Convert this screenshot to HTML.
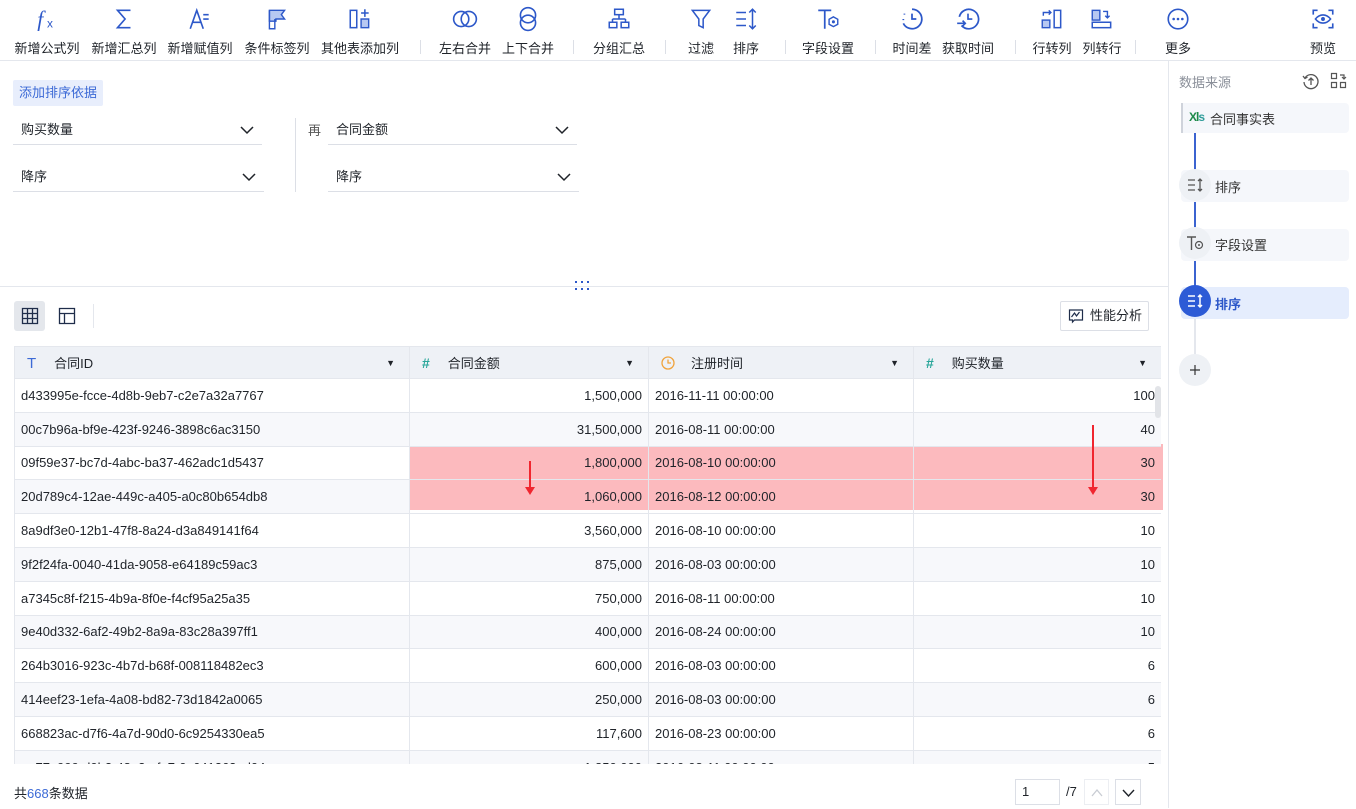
<!DOCTYPE html>
<html><head><meta charset="utf-8">
<style>
*{box-sizing:border-box;margin:0;padding:0}
body{width:1356px;height:808px;overflow:hidden;background:#fff;font-family:"Liberation Sans","Noto Sans CJK SC",sans-serif;color:#1f2329;position:relative;font-size:13px}
.a{position:absolute}
.tb{position:absolute;top:0;left:0;width:1356px;height:61px;border-bottom:1px solid #e4e7ed}
.ti{position:absolute;top:0;width:80px;margin-left:-40px;text-align:center}
.ti svg{position:absolute;left:27px;top:6px;width:26px;height:26px}
.ti span{position:absolute;top:38px;left:0;width:80px;font-size:13px;color:#1f2329;white-space:nowrap}
.sep{position:absolute;top:40px;width:1px;height:14px;background:#dcdfe6}
.sel{position:absolute;border-bottom:1px solid #dcdfe6;height:30px;font-size:13px;padding-left:8px;line-height:30px}
.sel svg{position:absolute;right:8px;top:11px}
table{border-collapse:collapse;table-layout:fixed;position:absolute;left:0;top:0;width:1147px}
td,th{border:1px solid #e4e7ed;font-size:13px;white-space:nowrap;overflow:hidden;padding:0 6px;font-weight:normal}
tr{height:33.8px}
tr.h{height:32px}
th{background:#eef1f6;text-align:left;position:relative}
tr:nth-child(odd) td{background:#f7f8fb}
tr td.w{background:#fff !important}
tr td.t{background:transparent !important}
.r{text-align:right}
.rp{position:absolute;left:1168px;top:61px;width:188px;height:747px;border-left:1px solid #e4e7ed}
.node{position:absolute;left:12px;width:168px;height:32px;background:#f5f7fb;border-radius:4px}
.circ{position:absolute;left:10px;width:32px;height:32px;border-radius:16px;background:#eef1f5}
</style></head><body>
<div class="tb">
<div class="ti" style="left:47px"><svg viewBox="0 0 24 24"><text x="3" y="19" font-family="Liberation Serif" font-style="italic" font-size="20" fill="#2d58c9">f</text><text x="12" y="20" font-family="Liberation Sans" font-size="11" fill="#2d58c9">x</text></svg><span>新增公式列</span></div>
<div class="ti" style="left:124px"><svg viewBox="0 0 24 24"><path d="M18 4H6l7 8-7 8h12" fill="none" stroke="#2d58c9" stroke-width="1.5"/></svg><span>新增汇总列</span></div>
<div class="ti" style="left:200px"><svg viewBox="0 0 24 24"><path d="M3 21L9 4l6 17M5.5 15h7" fill="none" stroke="#2d58c9" stroke-width="1.5"/><path d="M15 8h5M15 12h5" stroke="#2d58c9" stroke-width="1.5"/></svg><span>新增赋值列</span></div>
<div class="ti" style="left:277px"><svg viewBox="0 0 24 24"><path d="M5 4h14l-3 4 3 4H11v2H5z" fill="#b7c8f2" stroke="#2d58c9" stroke-width="1.3"/><path d="M5 4v17h5V12" fill="none" stroke="#2d58c9" stroke-width="1.3"/></svg><span>条件标签列</span></div>
<div class="ti" style="left:360px"><svg viewBox="0 0 24 24"><rect x="3" y="4" width="6" height="16" fill="none" stroke="#2d58c9" stroke-width="1.4"/><rect x="13" y="12" width="7" height="8" fill="#b7c8f2" stroke="#2d58c9" stroke-width="1.3"/><path d="M16.5 3v7M13 6.5h7" stroke="#2d58c9" stroke-width="1.4"/></svg><span>其他表添加列</span></div>
<div class="sep" style="left:420px"></div>
<div class="ti" style="left:465px"><svg viewBox="0 0 24 24"><circle cx="8.5" cy="12" r="7" fill="none" stroke="#2d58c9" stroke-width="1.5"/><circle cx="15.5" cy="12" r="7" fill="none" stroke="#2d58c9" stroke-width="1.5"/></svg><span>左右合并</span></div>
<div class="ti" style="left:528px"><svg viewBox="0 0 24 24"><circle cx="12" cy="8.5" r="7" fill="none" stroke="#2d58c9" stroke-width="1.5"/><circle cx="12" cy="15.5" r="7" fill="none" stroke="#2d58c9" stroke-width="1.5"/></svg><span>上下合并</span></div>
<div class="sep" style="left:573px"></div>
<div class="ti" style="left:619px"><svg viewBox="0 0 24 24"><rect x="8" y="3" width="8" height="5" fill="none" stroke="#2d58c9" stroke-width="1.4"/><path d="M12 8v4M6 12h12M6 12v3M18 12v3" fill="none" stroke="#2d58c9" stroke-width="1.4"/><rect x="3" y="15" width="7" height="5" fill="none" stroke="#2d58c9" stroke-width="1.4"/><rect x="14" y="15" width="7" height="5" fill="none" stroke="#2d58c9" stroke-width="1.4"/></svg><span>分组汇总</span></div>
<div class="sep" style="left:665px"></div>
<div class="ti" style="left:701px"><svg viewBox="0 0 24 24"><path d="M4 4h16l-6 8v8l-4-2v-6z" fill="none" stroke="#2d58c9" stroke-width="1.4"/></svg><span>过滤</span></div>
<div class="ti" style="left:746px"><svg viewBox="0 0 24 24"><path d="M3 6h9M3 12h9M3 18h9M18 3v18M15 6l3-3 3 3M15 18l3 3 3-3" fill="none" stroke="#2d58c9" stroke-width="1.4"/></svg><span>排序</span></div>
<div class="sep" style="left:785px"></div>
<div class="ti" style="left:828px"><svg viewBox="0 0 24 24"><path d="M3 4h12M9 4v17" fill="none" stroke="#2d58c9" stroke-width="1.6"/><path d="M17 10l4 2.3v4.6L17 19l-4-2.1v-4.6z" fill="none" stroke="#2d58c9" stroke-width="1.3"/><circle cx="17" cy="14.6" r="1.4" fill="#2d58c9"/></svg><span>字段设置</span></div>
<div class="sep" style="left:875px"></div>
<div class="ti" style="left:912px"><svg viewBox="0 0 24 24"><path d="M12 3a9 9 0 1 1-8 13" fill="none" stroke="#2d58c9" stroke-width="1.6"/><path d="M4 13v-1M5 8v-1" stroke="#2d58c9" stroke-width="1.6"/><path d="M12 7v5h4" fill="none" stroke="#2d58c9" stroke-width="1.6"/></svg><span>时间差</span></div>
<div class="ti" style="left:968px"><svg viewBox="0 0 24 24"><path d="M4 10a9 9 0 1 1 2 8" fill="none" stroke="#2d58c9" stroke-width="1.6"/><path d="M12 7v5h4M2 16h7M7 13.5l2.5 2.5L7 18.5" fill="none" stroke="#2d58c9" stroke-width="1.5"/></svg><span>获取时间</span></div>
<div class="sep" style="left:1015px"></div>
<div class="ti" style="left:1052px"><svg viewBox="0 0 24 24"><rect x="3" y="13" width="7" height="7" fill="#b7c8f2" stroke="#2d58c9" stroke-width="1.3"/><rect x="14" y="4" width="6" height="16" fill="none" stroke="#2d58c9" stroke-width="1.4"/><path d="M4 9V6h7M9 4l2 2-2 2" fill="none" stroke="#2d58c9" stroke-width="1.3"/></svg><span>行转列</span></div>
<div class="ti" style="left:1102px"><svg viewBox="0 0 24 24"><rect x="3" y="4" width="7" height="9" fill="#b7c8f2" stroke="#2d58c9" stroke-width="1.3"/><rect x="3" y="15" width="17" height="5" fill="none" stroke="#2d58c9" stroke-width="1.4"/><path d="M13 5h4v6M15 9l2 2 2-2" fill="none" stroke="#2d58c9" stroke-width="1.3"/></svg><span>列转行</span></div>
<div class="sep" style="left:1135px"></div>
<div class="ti" style="left:1178px"><svg viewBox="0 0 24 24"><circle cx="12" cy="12" r="9" fill="none" stroke="#2d58c9" stroke-width="1.5"/><circle cx="8" cy="12" r="1.2" fill="#2d58c9"/><circle cx="12" cy="12" r="1.2" fill="#2d58c9"/><circle cx="16" cy="12" r="1.2" fill="#2d58c9"/></svg><span>更多</span></div>
<div class="ti" style="left:1323px"><svg viewBox="0 0 24 24"><path d="M3 8V4h4M17 4h4v4M21 16v4h-4M7 20H3v-4" fill="none" stroke="#2d58c9" stroke-width="1.5"/><path d="M5 12c4-5 10-5 14 0-4 5-10 5-14 0z" fill="none" stroke="#2d58c9" stroke-width="1.4"/><circle cx="12" cy="12" r="1.8" fill="#2d58c9"/></svg><span>预览</span></div>
</div>

<div class="a" style="left:13px;top:80px;width:90px;height:26px;background:#e8eefc;border-radius:2px;color:#3c6ad6;font-size:13px;line-height:26px;text-align:center">添加排序依据</div>
<div class="sel" style="left:13px;top:115px;width:249px">购买数量<svg width="14" height="9" viewBox="0 0 14 9"><path d="M1 1l6 6 6-6" fill="none" stroke="#1f2329" stroke-width="1.5"/></svg></div>
<div class="sel" style="left:13px;top:162px;width:251px">降序<svg width="14" height="9" viewBox="0 0 14 9"><path d="M1 1l6 6 6-6" fill="none" stroke="#1f2329" stroke-width="1.5"/></svg></div>
<div class="a" style="left:295px;top:118px;width:1px;height:74px;background:#dcdfe6"></div>
<div class="a" style="left:308px;top:120px;font-size:13px;color:#555">再</div>
<div class="sel" style="left:328px;top:115px;width:249px">合同金额<svg width="14" height="9" viewBox="0 0 14 9"><path d="M1 1l6 6 6-6" fill="none" stroke="#1f2329" stroke-width="1.5"/></svg></div>
<div class="sel" style="left:328px;top:162px;width:251px">降序<svg width="14" height="9" viewBox="0 0 14 9"><path d="M1 1l6 6 6-6" fill="none" stroke="#1f2329" stroke-width="1.5"/></svg></div>

<div class="a" style="left:0;top:286px;width:1168px;height:1px;background:#e4e7ed"></div>
<svg class="a" style="left:574px;top:280px" width="18" height="12"><g fill="#2d58c9"><rect x="1" y="1" width="2" height="2"/><rect x="7" y="1" width="2" height="2"/><rect x="13" y="1" width="2" height="2"/><rect x="1" y="8" width="2" height="2"/><rect x="7" y="8" width="2" height="2"/><rect x="13" y="8" width="2" height="2"/></g></svg>

<div class="a" style="left:14px;top:301px;width:31px;height:30px;background:#e4e7ec;border-radius:3px"></div>
<svg class="a" style="left:21px;top:307px" width="18" height="18" viewBox="0 0 18 18"><path d="M1.5 1.5h15v15h-15zM1.5 6.5h15M1.5 11.5h15M6.5 1.5v15M11.5 1.5v15" fill="none" stroke="#1f2d4a" stroke-width="1.3"/></svg>
<svg class="a" style="left:58px;top:307px" width="18" height="18" viewBox="0 0 18 18"><path d="M1.5 1.5h15v15h-15zM1.5 6.5h15M6.5 6.5v10" fill="none" stroke="#1f2d4a" stroke-width="1.3"/></svg>
<div class="a" style="left:93px;top:304px;width:1px;height:24px;background:#e4e7ed"></div>
<div class="a" style="left:1060px;top:301px;width:89px;height:30px;border:1px solid #dcdfe6;border-radius:2px;font-size:13px;line-height:28px;padding-left:29px">性能分析</div>
<svg class="a" style="left:1068px;top:308px" width="16" height="16" viewBox="0 0 16 16"><path d="M1.5 2h13v10h-8l-2 2v-2h-3z" fill="none" stroke="#1f2d4a" stroke-width="1.2"/><path d="M3.5 9l3-4 2 3 3-4" fill="none" stroke="#1f2d4a" stroke-width="1.2"/></svg>

<div class="a" style="left:407px;top:444px;width:756px;height:66px;background:rgba(248,90,100,0.42);z-index:1"></div>
<div class="a" style="left:14px;top:346px;width:1147px;height:418px;overflow:hidden;z-index:2">
<table>
<colgroup><col style="width:395px"><col style="width:239px"><col style="width:265px"><col style="width:248px"></colgroup>
<tr class="h"><th><span style="color:#3c6ad6;font-size:15px;margin:0 18px 0 6px">T</span>合同ID<span style="position:absolute;right:14px;top:11px;font-size:9px">▼</span></th>
<th><span style="color:#29a69a;font-size:14px;margin:0 18px 0 6px;font-weight:bold">#</span>合同金额<span style="position:absolute;right:14px;top:11px;font-size:9px">▼</span></th>
<th><svg width="14" height="14" viewBox="0 0 14 14" style="vertical-align:-2px;margin:0 16px 0 6px"><circle cx="7" cy="7" r="6" fill="none" stroke="#f0a33c" stroke-width="1.3"/><path d="M7 3.5V7h3" fill="none" stroke="#f0a33c" stroke-width="1.3"/></svg>注册时间<span style="position:absolute;right:14px;top:11px;font-size:9px">▼</span></th>
<th><span style="color:#29a69a;font-size:14px;margin:0 18px 0 6px;font-weight:bold">#</span>购买数量<span style="position:absolute;right:14px;top:11px;font-size:9px">▼</span></th></tr>
<tr><td class="w">d433995e-fcce-4d8b-9eb7-c2e7a32a7767</td><td class="r w">1,500,000</td><td class="w">2016-11-11 00:00:00</td><td class="r w">100</td></tr>
<tr><td>00c7b96a-bf9e-423f-9246-3898c6ac3150</td><td class="r">31,500,000</td><td>2016-08-11 00:00:00</td><td class="r">40</td></tr>
<tr><td class="w">09f59e37-bc7d-4abc-ba37-462adc1d5437</td><td class="r t">1,800,000</td><td class="t">2016-08-10 00:00:00</td><td class="r t">30</td></tr>
<tr><td>20d789c4-12ae-449c-a405-a0c80b654db8</td><td class="r t">1,060,000</td><td class="t">2016-08-12 00:00:00</td><td class="r t">30</td></tr>
<tr><td class="w">8a9df3e0-12b1-47f8-8a24-d3a849141f64</td><td class="r w">3,560,000</td><td class="w">2016-08-10 00:00:00</td><td class="r w">10</td></tr>
<tr><td>9f2f24fa-0040-41da-9058-e64189c59ac3</td><td class="r">875,000</td><td>2016-08-03 00:00:00</td><td class="r">10</td></tr>
<tr><td class="w">a7345c8f-f215-4b9a-8f0e-f4cf95a25a35</td><td class="r w">750,000</td><td class="w">2016-08-11 00:00:00</td><td class="r w">10</td></tr>
<tr><td>9e40d332-6af2-49b2-8a9a-83c28a397ff1</td><td class="r">400,000</td><td>2016-08-24 00:00:00</td><td class="r">10</td></tr>
<tr><td class="w">264b3016-923c-4b7d-b68f-008118482ec3</td><td class="r w">600,000</td><td class="w">2016-08-03 00:00:00</td><td class="r w">6</td></tr>
<tr><td>414eef23-1efa-4a08-bd82-73d1842a0065</td><td class="r">250,000</td><td>2016-08-03 00:00:00</td><td class="r">6</td></tr>
<tr><td class="w">668823ac-d7f6-4a7d-90d0-6c9254330ea5</td><td class="r w">117,600</td><td class="w">2016-08-23 00:00:00</td><td class="r w">6</td></tr>
<tr><td>ee77e999-d0b2-48e2-afa7-0c641263ed04</td><td class="r">1,850,000</td><td>2016-08-11 00:00:00</td><td class="r">5</td></tr>
</table>
</div>
<div class="a" style="left:1155px;top:386px;width:6px;height:32px;background:#e2e4e8;border-radius:3px;z-index:3"></div>
<div class="a" style="left:529px;top:461px;width:2px;height:28px;background:#f0262f;z-index:3"></div>
<div class="a" style="left:525px;top:487px;width:0;height:0;border-left:5px solid transparent;border-right:5px solid transparent;border-top:8px solid #f0262f;z-index:3"></div>
<div class="a" style="left:1092px;top:425px;width:2px;height:64px;background:#f0262f;z-index:3"></div>
<div class="a" style="left:1088px;top:487px;width:0;height:0;border-left:5px solid transparent;border-right:5px solid transparent;border-top:8px solid #f0262f;z-index:3"></div>

<div class="a" style="left:14px;top:783px;font-size:13px">共<span style="color:#3c6ad6">668</span>条数据</div>
<div class="a" style="left:1015px;top:779px;width:45px;height:26px;border:1px solid #dcdfe6;font-size:13px;line-height:24px;padding-left:6px">1</div>
<div class="a" style="left:1066px;top:784px;font-size:13px">/7</div>
<div class="a" style="left:1084px;top:779px;width:25px;height:26px;border:1px solid #eceef2"><svg width="25" height="26"><path d="M7 16l5-6 5 6" fill="none" stroke="#c8ccd3" stroke-width="1.3"/></svg></div>
<div class="a" style="left:1115px;top:779px;width:26px;height:26px;border:1px solid #dcdfe6"><svg width="25" height="26"><path d="M7 10l5.5 6 5.5-6" fill="none" stroke="#1f2329" stroke-width="1.4"/></svg></div>

<div class="rp">
<div class="a" style="left:10px;top:11px;font-size:13px;color:#8a8f99">数据来源</div>
<svg class="a" style="left:133px;top:11px" width="18" height="18" viewBox="0 0 18 18"><path d="M3 6a7 7 0 1 1-1 4" fill="none" stroke="#555" stroke-width="1.3"/><path d="M1 4l2 2.5 2.5-1.5M9 13V6M6.5 8.5L9 6l2.5 2.5" fill="none" stroke="#555" stroke-width="1.3"/></svg>
<svg class="a" style="left:161px;top:11px" width="17" height="17" viewBox="0 0 17 17"><path d="M1.5 1.5h5v5h-5zM10.5 10.5h5v5h-5zM1.5 10.5h5v5h-5z" fill="none" stroke="#555" stroke-width="1.2"/><path d="M10 3h4v4M12 5l2 2 2-2" fill="none" stroke="#555" stroke-width="1.2"/></svg>
<div class="node" style="top:42px;height:30px;border-left:2px solid #cfd3db;border-radius:0 4px 4px 0"><span class="a" style="left:6px;top:7px;font-size:12px;font-weight:bold;color:#1d8a4a;letter-spacing:-1px">Xl<span style="color:#2f9c9a">s</span></span><span class="a" style="left:27px;top:6px;font-size:13px;color:#333">合同事实表</span></div>
<div class="a" style="left:25px;top:72px;width:2px;height:164px;background:#3b63d0"></div>
<div class="a" style="left:25px;top:256px;width:2px;height:60px;background:#e4e7ed"></div>
<div class="node" style="top:109px"><span class="a" style="left:34px;top:7px;color:#333">排序</span></div>
<div class="circ" style="top:108px"><svg width="32" height="32" viewBox="0 0 32 32"><path d="M9 11h7M9 16h7M9 21h7M21 10v12M19 12l2-2 2 2M19 20l2 2 2-2" fill="none" stroke="#555" stroke-width="1.3"/></svg></div>
<div class="node" style="top:168px"><span class="a" style="left:34px;top:6px;color:#333">字段设置</span></div>
<div class="circ" style="top:166px"><svg width="32" height="32" viewBox="0 0 32 32"><path d="M8 10h9M12.5 10v13" fill="none" stroke="#555" stroke-width="1.4"/><circle cx="20" cy="18" r="3.5" fill="none" stroke="#555" stroke-width="1.2"/><circle cx="20" cy="18" r="1" fill="#555"/></svg></div>
<div class="node" style="top:226px;background:#e5edfd"><span class="a" style="left:34px;top:7px;color:#2d58c9;font-weight:bold">排序</span></div>
<div class="circ" style="top:224px;background:#2d5bd6"><svg width="32" height="32" viewBox="0 0 32 32"><path d="M9 11h7M9 16h7M9 21h7M21 10v12M19 12l2-2 2 2M19 20l2 2 2-2" fill="none" stroke="#fff" stroke-width="1.5"/></svg></div>
<div class="circ" style="top:293px"><svg width="32" height="32"><path d="M16 11v10M11 16h10" stroke="#333" stroke-width="1.2"/></svg></div>
</div>
</body></html>
